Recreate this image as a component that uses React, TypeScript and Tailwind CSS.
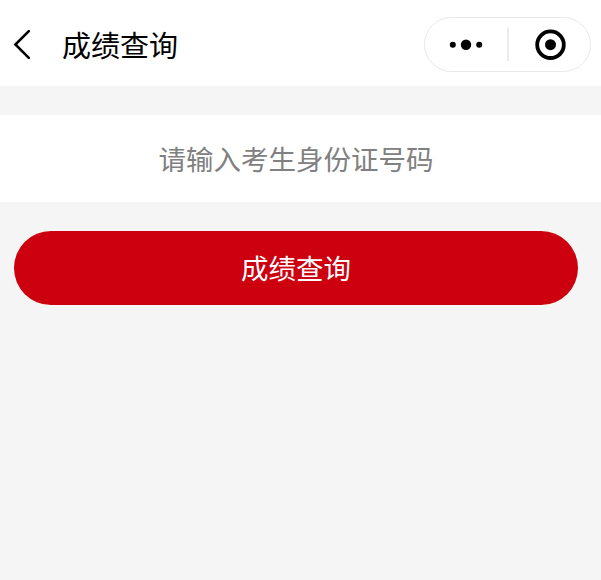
import React, { useState } from "react";

const BackIcon = () => (
    <svg width="18" height="31" viewBox="0 0 18 31" fill="none" stroke="#000" strokeWidth="2.6" strokeLinecap="round">
        <path d="M15.8 2.2 L2.4 15.5 L15.8 28.8" />
    </svg>
);

const MoreIcon = () => (
    <svg width="34" height="13" viewBox="0 0 34 13" fill="#000">
        <circle cx="3.8" cy="6.7" r="3" />
        <circle cx="17" cy="6.7" r="5.2" />
        <circle cx="30.2" cy="6.7" r="3" />
    </svg>
);

const CloseIcon = () => (
    <svg width="33" height="33" viewBox="0 0 33 33">
        <circle cx="16.5" cy="16.7" r="13.3" fill="none" stroke="#000" strokeWidth="3.8" />
        <circle cx="16.5" cy="16.7" r="5.5" fill="#000" />
    </svg>
);

const Header = () => (
    <header className="flex h-[86px] items-center bg-white pt-[3px]">
        <button className="ml-[13px] flex">
            <BackIcon />
        </button>
        <h1 className="ml-[31px] text-[29px] leading-[29px] text-black">成绩查询</h1>
        <div className="mr-[10px] ml-auto flex h-[55px] w-[167px] items-center rounded-full border border-[#e8e8e8]">
            <button className="flex w-[82px] justify-center">
                <MoreIcon />
            </button>
            <span className="h-[33px] w-[2px] bg-[#ebebeb]" />
            <button className="flex flex-1 justify-center pl-[2px]">
                <CloseIcon />
            </button>
        </div>
    </header>
);

export default function App() {
    const [idNumber, setIdNumber] = useState("");

    return (
        <div className="h-[580px] w-[601px] bg-[#f5f5f5] font-['Noto_Sans_CJK_SC',sans-serif]">
            <Header />
            <input
                type="text"
                value={idNumber}
                onChange={(e) => setIdNumber(e.target.value)}
                placeholder="请输入考生身份证号码"
                className="mt-[29px] block h-[87px] w-full bg-white pr-[9px] pb-px text-center text-[27.5px] text-black placeholder:text-[#808080] focus:outline-none"
            />
            <div className="mt-[29px] pr-[23px] pl-[14px]">
                <button className="h-[74px] w-full rounded-full bg-[#cc000e] text-[27.5px] text-white">
                    成绩查询
                </button>
            </div>
        </div>
    );
}
